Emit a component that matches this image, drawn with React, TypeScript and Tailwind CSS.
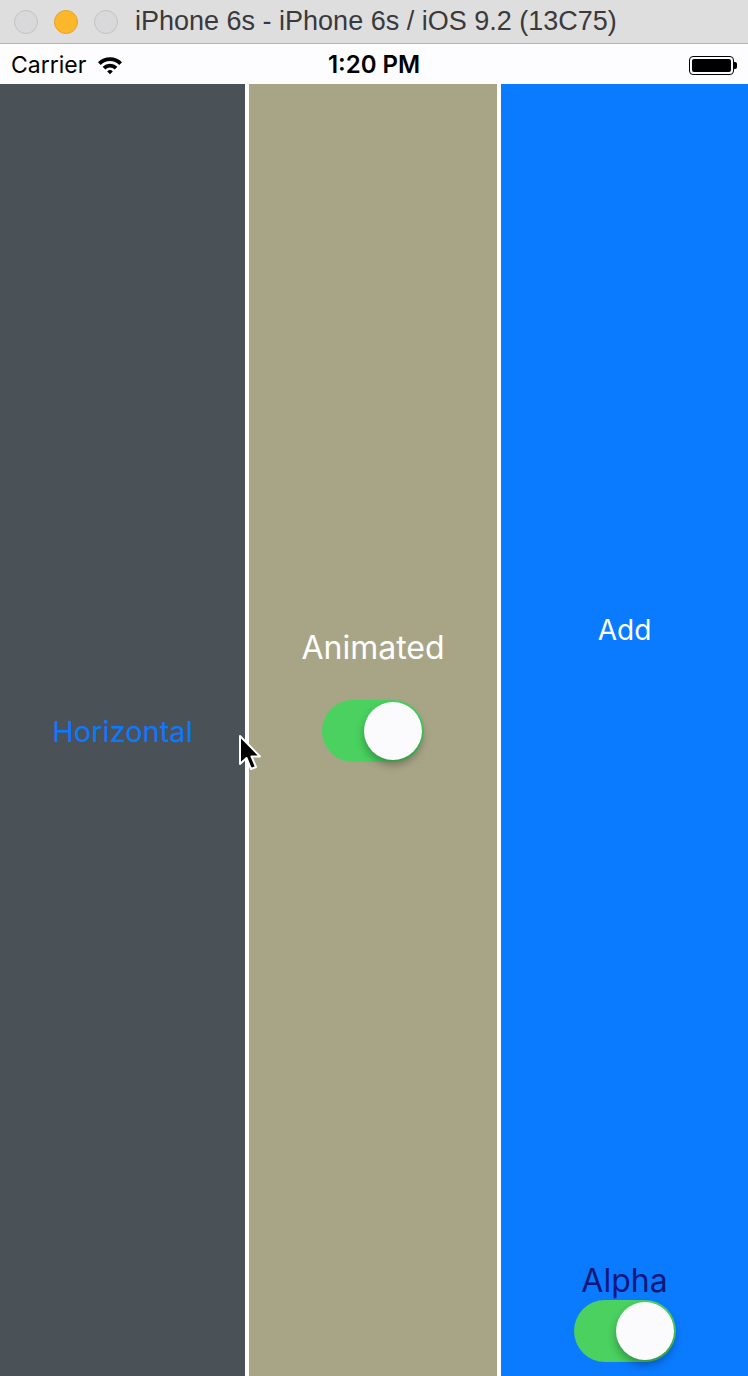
import React from "react";

const SF = { fontFamily: "Inter, 'Liberation Sans', sans-serif" };

function TrafficLight({ color }: { color: "gray" | "orange" }) {
  return color === "orange" ? (
    <div className="size-[24px] rounded-full bg-[#fdb72a] border border-[#e9a21f]" />
  ) : (
    <div className="size-[24px] rounded-full bg-[#d9d8da] border border-[#c3c2c5]" />
  );
}

function Wifi() {
  return (
    <svg width="26" height="20" viewBox="0 0 26 20">
      <path d="M1 7.2 A17 17 0 0 1 25 7.2 L22.3 9.9 A13.2 13.2 0 0 0 3.7 9.9 Z" fill="#000" />
      <path d="M5.6 11.8 A10.5 10.5 0 0 1 20.4 11.8 L17.7 14.5 A6.7 6.7 0 0 0 8.3 14.5 Z" fill="#000" />
      <path d="M10.2 16.4 A4 4 0 0 1 15.8 16.4 L13 19.3 Z" fill="#000" />
    </svg>
  );
}

function Battery() {
  return (
    <div className="flex items-center">
      <div className="w-[45px] h-[19px] rounded-[4px] border-[1.5px] border-black p-[2px]">
        <div className="w-full h-full rounded-[2px] bg-black" />
      </div>
      <div className="w-[3px] h-[7px] rounded-r-[2px] bg-black" />
    </div>
  );
}

function Toggle() {
  return (
    <div className="relative w-[102px] h-[62px] rounded-full bg-[#4ad15f]">
      <div className="absolute right-[2px] top-[2px] size-[58px] rounded-full bg-[#fbfbfd] shadow-[0_5px_8px_rgba(0,0,0,0.3)]" />
    </div>
  );
}

function Cursor() {
  return (
    <svg className="absolute left-[238px] top-[734px]" width="26" height="42" viewBox="0 0 26 42">
      <path
        d="M2 2 L2 30 L8.5 24 L13 35 L18 33 L13.5 22.5 L22 22.5 Z"
        fill="#000"
        stroke="#fff"
        strokeWidth="2"
        strokeLinejoin="round"
      />
    </svg>
  );
}

export default function App() {
  return (
    <div className="relative w-[748px] h-[1376px] flex flex-col overflow-hidden bg-white">
      {/* window chrome */}
      <div className="h-[44px] flex items-center bg-[#dfdedf] border-b border-[#b4b3b5] px-[14px]">
        <div className="flex gap-[16px]">
          <TrafficLight color="gray" />
          <TrafficLight color="orange" />
          <TrafficLight color="gray" />
        </div>
        <span
          className="ml-[17px] text-[27px] leading-none text-[#3a393b]"
          style={{ fontFamily: "'Liberation Sans', Arial, sans-serif" }}
        >
          iPhone 6s - iPhone 6s / iOS 9.2 (13C75)
        </span>
      </div>

      {/* status bar */}
      <div className="h-[40px] relative flex items-center justify-between bg-[#fdfdff] px-[11px] pt-[2px]" style={SF}>
        <div className="flex items-center gap-[11px]">
          <span className="text-[23px] text-black">Carrier</span>
          <Wifi />
        </div>
        <span className="absolute left-0 right-0 text-center text-[24px] font-semibold text-black">
          1:20 PM
        </span>
        <Battery />
      </div>

      {/* columns */}
      <div className="flex-1 flex gap-[4px] bg-white" style={SF}>
        <div className="w-[245px] flex items-center justify-center pt-[4px] bg-[#4b5257]">
          <span className="text-[29px] text-[#0b7afd]">Horizontal</span>
        </div>

        <div className="w-[248px] flex flex-col items-center pt-[546px] bg-[#a8a587]">
          <span className="text-[32px] leading-[36px] text-white">Animated</span>
          <div className="mt-[34px]">
            <Toggle />
          </div>
        </div>

        <div className="flex-1 flex flex-col items-center pt-[528px] pb-[14px] bg-[#0a7afe]">
          <span className="text-[28px] leading-[36px] text-white">Add</span>
          <div className="mt-auto flex flex-col items-center">
            <span className="text-[32px] leading-[34px] text-[#13177a]">Alpha</span>
            <div className="mt-[2px]">
              <Toggle />
            </div>
          </div>
        </div>
      </div>

      <Cursor />
    </div>
  );
}
